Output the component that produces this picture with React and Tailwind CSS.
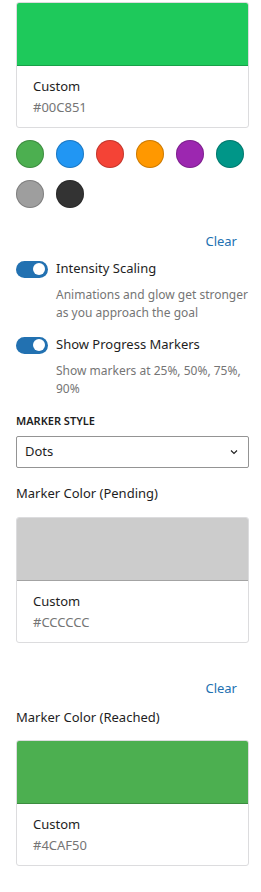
const PRESETS = ['#4CAF50', '#2196F3', '#F44336', '#FF9800', '#9C27B0', '#009688', '#9E9E9E', '#333333'];

function ColorCard({ color, hex }) {
  return (
    <div className="border border-[#dcdcde] rounded-[3px] overflow-hidden bg-white">
      <div className="h-[63px] border-b border-black/20" style={{ backgroundColor: color }} />
      <div className="px-4 pt-[10px] pb-[10px]">
        <div className="text-[13px] leading-5 text-[#1e1e1e]">Custom</div>
        <div className="text-[13px] leading-5 mt-[1px] text-[#757575]">{hex}</div>
      </div>
    </div>
  );
}

function Toggle({ label, help }) {
  return (
    <div>
      <div className="flex items-center gap-2 h-5">
        <span className="relative w-[32px] h-[17px] rounded-full bg-[#2271b1] flex-shrink-0">
          <span className="absolute right-[3px] top-[2.5px] w-3 h-3 rounded-full bg-white" />
        </span>
        <span className="text-[13px] text-[#1e1e1e]">{label}</span>
      </div>
      <p className="mt-[7px] pl-10 text-[12px] leading-[18px] text-[#757575]">{help}</p>
    </div>
  );
}

export default function App() {
  return (
    <div className="w-[261px] bg-white pl-4 pr-3 pt-[2px] pb-6 font-['Segoe_UI','Noto_Sans',sans-serif]">
      <ColorCard color="#1ec95b" hex="#00C851" />

      <div className="grid grid-cols-[repeat(6,28px)] gap-x-3 gap-y-3 mt-3">
        {PRESETS.map((c) => (
          <span
            key={c}
            className="w-7 h-7 rounded-full shadow-[inset_0_0_0_1px_rgba(0,0,0,0.2)]"
            style={{ backgroundColor: c }}
          />
        ))}
      </div>

      <div className="flex justify-end mt-[23px] pr-3">
        <button className="text-[13px] leading-5 text-[#2271b1]">Clear</button>
      </div>

      <div className="mt-2">
        <Toggle label="Intensity Scaling" help="Animations and glow get stronger as you approach the goal" />
      </div>
      <div className="mt-[13px]">
        <Toggle label="Show Progress Markers" help="Show markers at 25%, 50%, 75%, 90%" />
      </div>

      <div className="mt-[15px] text-[11px] leading-4 font-semibold uppercase text-[#1e1e1e]">Marker Style</div>
      <div className="mt-[7px] h-8 border border-[#949494] rounded-[2px] flex items-center justify-between pl-[8px] pr-[8px]">
        <span className="text-[13px] text-[#1e1e1e]">Dots</span>
        <svg width="12" height="12" viewBox="0 0 24 24" fill="none" stroke="#1e1e1e" strokeWidth="2.2">
          <path d="M6 9l6 6 6-6" />
        </svg>
      </div>

      <div className="mt-[15px] text-[13px] leading-5 text-[#1e1e1e]">Marker Color (Pending)</div>
      <div className="mt-[14px]">
        <ColorCard color="#cccccc" hex="#CCCCCC" />
      </div>

      <div className="flex justify-end mt-[35px] pr-3">
        <button className="text-[13px] leading-5 text-[#2271b1]">Clear</button>
      </div>
      <div className="mt-[9px] text-[13px] leading-5 text-[#1e1e1e]">Marker Color (Reached)</div>
      <div className="mt-[13px]">
        <ColorCard color="#4CAF50" hex="#4CAF50" />
      </div>
    </div>
  );
}
